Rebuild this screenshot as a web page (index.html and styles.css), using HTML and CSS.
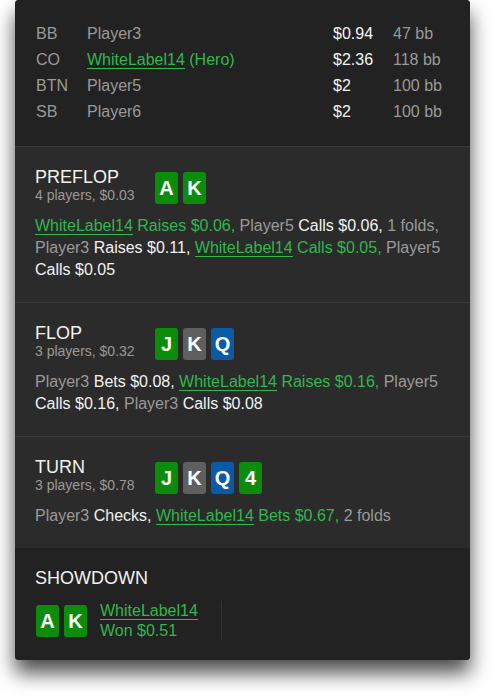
FILE: index.html
```html
<!DOCTYPE html>
<html>
<head>
<meta charset="utf-8">
<link rel="stylesheet" href="styles.css">
</head>
<body>
<div class="panel">
  <section class="seats">
    <div class="seat"><span class="pos">BB</span><span class="name">Player3</span><span class="stack">$0.94</span><span class="bb">47 bb</span></div>
    <div class="seat"><span class="pos">CO</span><span class="name hero"><span class="u">WhiteLabel14</span> (Hero)</span><span class="stack">$2.36</span><span class="bb">118 bb</span></div>
    <div class="seat"><span class="pos">BTN</span><span class="name">Player5</span><span class="stack">$2</span><span class="bb">100 bb</span></div>
    <div class="seat"><span class="pos">SB</span><span class="name">Player6</span><span class="stack">$2</span><span class="bb">100 bb</span></div>
  </section>

  <section class="street">
    <div class="head">
      <div class="titles"><div class="title">PREFLOP</div><div class="sub">4 players, $0.03</div></div>
      <div class="cards"><span class="card g">A</span><span class="card g">K</span></div>
    </div>
    <p class="actions"><span class="hero"><span class="u">WhiteLabel14</span> Raises $0.06,</span> <span class="p">Player5</span> <span class="w">Calls $0.06,</span> <span class="p">1 folds,</span> <span class="p">Player3</span> <span class="w">Raises $0.11,</span> <span class="hero"><span class="u">WhiteLabel14</span> Calls $0.05,</span> <span class="p">Player5</span> <span class="w">Calls $0.05</span></p>
  </section>

  <section class="street">
    <div class="head">
      <div class="titles"><div class="title">FLOP</div><div class="sub">3 players, $0.32</div></div>
      <div class="cards"><span class="card g">J</span><span class="card k">K</span><span class="card b">Q</span></div>
    </div>
    <p class="actions"><span class="p">Player3</span> <span class="w">Bets $0.08,</span> <span class="hero"><span class="u">WhiteLabel14</span> Raises $0.16,</span> <span class="p">Player5</span> <span class="w">Calls $0.16,</span> <span class="p">Player3</span> <span class="w">Calls $0.08</span></p>
  </section>

  <section class="street last">
    <div class="head">
      <div class="titles"><div class="title">TURN</div><div class="sub">3 players, $0.78</div></div>
      <div class="cards"><span class="card g">J</span><span class="card k">K</span><span class="card b">Q</span><span class="card g">4</span></div>
    </div>
    <p class="actions"><span class="p">Player3</span> <span class="w">Checks,</span> <span class="hero"><span class="u">WhiteLabel14</span> Bets $0.67,</span> <span class="p">2 folds</span></p>
  </section>

  <section class="showdown">
    <div class="title">SHOWDOWN</div>
    <div class="winners">
      <div class="winner">
        <div class="cards"><span class="card g">A</span><span class="card g">K</span></div>
        <div class="who"><div><span class="u">WhiteLabel14</span></div><div>Won $0.51</div></div>
      </div>
    </div>
  </section>
</div>
</body>
</html>
```
FILE: styles.css
```css
html, body {
  margin: 0;
  padding: 0;
  background: #ffffff;
}
body {
  font-family: "Liberation Sans", Arial, sans-serif;
  font-size: 16px;
  color: #999999;
  min-height: 699px;
  padding-bottom: 39px;
  box-sizing: border-box;
}
.panel {
  margin: 0 0 0 15px;
  width: 455px;
  background: #2b2b2b;
  border-radius: 4px;
  box-shadow: 0 13px 20px rgba(0, 0, 0, 0.7);
  overflow: hidden;
}
.seats {
  background: #222222;
  padding: 21px 20px 21px 21px;
  border-bottom: 1px solid #3a3a3a;
}
.seat {
  display: grid;
  grid-template-columns: 51px 1fr 60px 57px;
  line-height: 26px;
  height: 26px;
}
.pos, .name, .bb { color: #9a9a9a; }
.stack { color: #f2f2f2; }
.hero { color: #2fb84c; }
.u { border-bottom: 1px solid #2fb84c; }

.street {
  padding: 20px 20px 21px;
  border-bottom: 1px solid #3a3a3a;
}
.street.last { border-bottom: none; }
.head {
  display: flex;
  align-items: flex-end;
}
.titles { width: 120px; }
.title {
  font-size: 18px;
  line-height: 20px;
  color: #f2f2f2;
}
.sub {
  font-size: 14px;
  line-height: 17px;
  color: #999999;
}
.cards {
  display: flex;
  gap: 5px;
}
.card {
  width: 23px;
  height: 32px;
  border-radius: 3px;
  color: #ffffff;
  font-weight: bold;
  font-size: 20px;
  display: flex;
  align-items: center;
  justify-content: center;
}
.card.g { background: #0b8c0b; }
.card.k { background: #5f5f5f; }
.card.b { background: #0b5aa6; }
.actions {
  margin: 11px 0 0;
  line-height: 22px;
}
.p { color: #9a9a9a; }
.w { color: #f2f2f2; }

.showdown {
  background: #222222;
  padding: 20px 20px 19px;
}
.winners {
  margin-top: 13px;
  display: flex;
}
.winner {
  display: flex;
  align-items: center;
  gap: 13px;
  padding: 0 23px 0 1px;
  border-right: 1px solid #333333;
  height: 40px;
}
.who {
  color: #2fb84c;
  line-height: 20px;
}
```
